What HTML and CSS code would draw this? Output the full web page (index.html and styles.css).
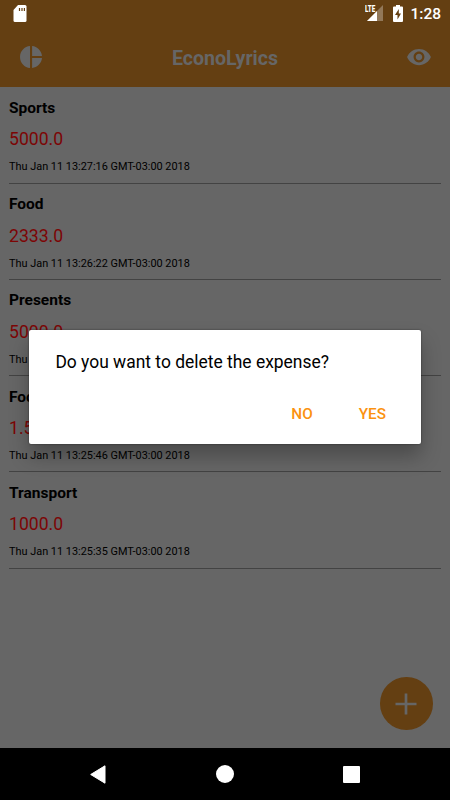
FILE: index.html
```html
<!DOCTYPE html>
<html lang="en">
<head>
<meta charset="utf-8">
<title>EconoLyrics</title>
<link rel="stylesheet" href="styles.css">
</head>
<body>
<div class="phone">
  <header class="top">
    <div class="status">
      <svg class="sd" width="14" height="18" viewBox="0 0 14 18"><path d="M5 0h7q1.500 0 1.500 1.500v14q0 1.500-1.500 1.500H2Q.5 17 .5 15.500V5z" fill="#fff"/><path d="M6.500 3v3M9 3v3M11.400 3v3" stroke="#643f12" stroke-width="1.200"/></svg>
      <div class="status-right">
        <div class="signal">
          <svg width="20" height="18" viewBox="0 0 20 18"><path d="M19 1v16H3z" fill="#927859"/><path d="M13 7v10H3z" fill="#fff"/><path d="M0 0h11.500v7L8 10H0z" fill="#643f12"/></svg>
          <span class="lte">LTE</span>
        </div>
        <svg class="battery" width="10" height="17" viewBox="0 0 10 17"><path d="M3 0h4v1.500h2q1 0 1 1V16q0 1-1 1H1q-1 0-1-1V2.500q0-1 1-1h2z" fill="#fff"/><path d="M5.800 4L2 10h2.500v4.500L8 8.500H5.800z" fill="#643f12"/></svg>
        <span class="clock">1:28</span>
      </div>
    </div>
    <div class="toolbar">
      <svg class="pie" width="24" height="24" viewBox="0 0 24 24" fill="#666"><path d="M11 1v22C5.500 22.500 1 18 1 12S5.500 1.500 11 1zM13.100 1v9.900H23C22.500 5.800 18.300 1.500 13.100 1zM13.100 13.100V23c5.200-.5 9.400-4.700 9.900-9.900z"/></svg>
      <h1>EconoLyrics</h1>
      <svg class="eye" width="26" height="26" viewBox="0 0 24 24" fill="#666"><path d="M12 4.500C7 4.500 2.730 7.610 1 12c1.730 4.390 6 7.500 11 7.500s9.270-3.110 11-7.500c-1.730-4.390-6-7.500-11-7.500zM12 17c-2.760 0-5-2.240-5-5s2.240-5 5-5 5 2.240 5 5-2.240 5-5 5zm0-8c-1.660 0-3 1.340-3 3s1.340 3 3 3 3-1.340 3-3-1.340-3-3-3z"/></svg>
    </div>
  </header>
  <main class="list">
    <article class="item"><h2>Sports</h2><p class="amount">5000.0</p><p class="date">Thu Jan 11 13:27:16 GMT-03:00 2018</p></article>
    <article class="item"><h2>Food</h2><p class="amount">2333.0</p><p class="date">Thu Jan 11 13:26:22 GMT-03:00 2018</p></article>
    <article class="item"><h2>Presents</h2><p class="amount">5000.0</p><p class="date">Thu</p></article>
    <article class="item"><h2>Food</h2><p class="amount">1.5</p><p class="date">Thu Jan 11 13:25:46 GMT-03:00 2018</p></article>
    <article class="item"><h2>Transport</h2><p class="amount">1000.0</p><p class="date">Thu Jan 11 13:25:35 GMT-03:00 2018</p></article>
  </main>
  <nav class="nav">
    <svg width="16" height="19" viewBox="0 0 16 19"><path d="M15 .8v17.400L.7 9.500z" fill="#fff" stroke="#fff" stroke-linejoin="round"/></svg>
    <span class="home"></span>
    <span class="recent"></span>
  </nav>
  <button class="fab" aria-label="Add"><svg width="22" height="22" viewBox="0 0 22 22"><path d="M11 .5v21M.5 11h21" stroke="#666" stroke-width="2.700"/></svg></button>
  <section class="dialog" role="dialog">
    <p>Do you want to delete the expense?</p>
    <div class="actions"><button>NO</button><button>YES</button></div>
  </section>
</div>
</body>
</html>
```

FILE: styles.css
```css
* { box-sizing: border-box; }
body { margin: 0; font-family: Roboto, sans-serif; }
h1, h2, p { margin: 0; }
svg { display: block; }
button { border: 0; background: none; padding: 0; font: inherit; }

.phone {
  position: relative;
  display: flex;
  flex-direction: column;
  width: 450px;
  height: 800px;
  overflow: hidden;
  background: #666;
}

.top { height: 87.300px; background: #643f12; }
.status {
  display: flex;
  justify-content: space-between;
  height: 27px;
  padding: 4px 9px 0 12.500px;
}
.sd { margin-top: 0.500px; }
.status-right { display: flex; }
.signal { position: relative; margin-right: 9px; }
.lte {
  position: absolute;
  left: 1px;
  top: 0;
  color: #fff;
  font: 900 9.500px/10px Roboto, sans-serif;
  transform: scaleX(.66);
  transform-origin: left;
}
.battery { margin: 1px 7.500px 0 0; }
.clock { color: #fff; font-size: 15.500px; font-weight: 500; line-height: 20px; }
.toolbar {
  display: grid;
  grid-template-columns: 26px 1fr 26px;
  align-items: center;
  height: 60px;
  padding: 0 18px;
}
.pie { margin-left: 1px; }
.toolbar h1 {
  padding-top: 3px;
  color: #666;
  font-size: 19.600px;
  font-weight: 700;
  line-height: 24px;
  text-align: center;
}

.list { flex: 1; padding: 0 9px; }
.item { height: 96.250px; padding-top: 11.600px; border-bottom: 1px solid #434343; }
.item h2 { font-size: 15.500px; font-weight: 700; line-height: 18px; }
.amount { margin-top: 11.400px; color: #7c0505; font-size: 17.600px; line-height: 22px; }
.date { margin-top: 10px; font-size: 10.900px; line-height: 14px; }

.nav {
  display: grid;
  grid-template-columns: 16px 18px 17px;
  justify-content: space-between;
  align-items: center;
  height: 52px;
  padding: 0 90px;
  background: #000;
}
.home { height: 18px; border-radius: 50%; background: #fff; }
.recent { height: 17px; border-radius: 1px; background: #fff; }

.fab {
  position: absolute;
  left: 380px;
  top: 677.300px;
  display: grid;
  place-items: center;
  width: 52.500px;
  height: 52.500px;
  border-radius: 50%;
  background: #643f12;
}

.dialog {
  position: absolute;
  left: 29px;
  top: 329.500px;
  width: 392px;
  height: 114px;
  padding: 20px 26.400px 0;
  border-radius: 2px;
  background: #fff;
  box-shadow: 0 12px 20px rgba(0, 0, 0, .28), 0 0 2px rgba(0, 0, 0, .5);
}
.dialog p { font-size: 17.450px; line-height: 24px; }
.actions {
  display: flex;
  justify-content: flex-end;
  gap: 46px;
  margin: 30px 8.600px 0 0;
  color: #fb9210;
  font-size: 15.300px;
  font-weight: 500;
  line-height: 20px;
}
.actions button { color: inherit; }
```
